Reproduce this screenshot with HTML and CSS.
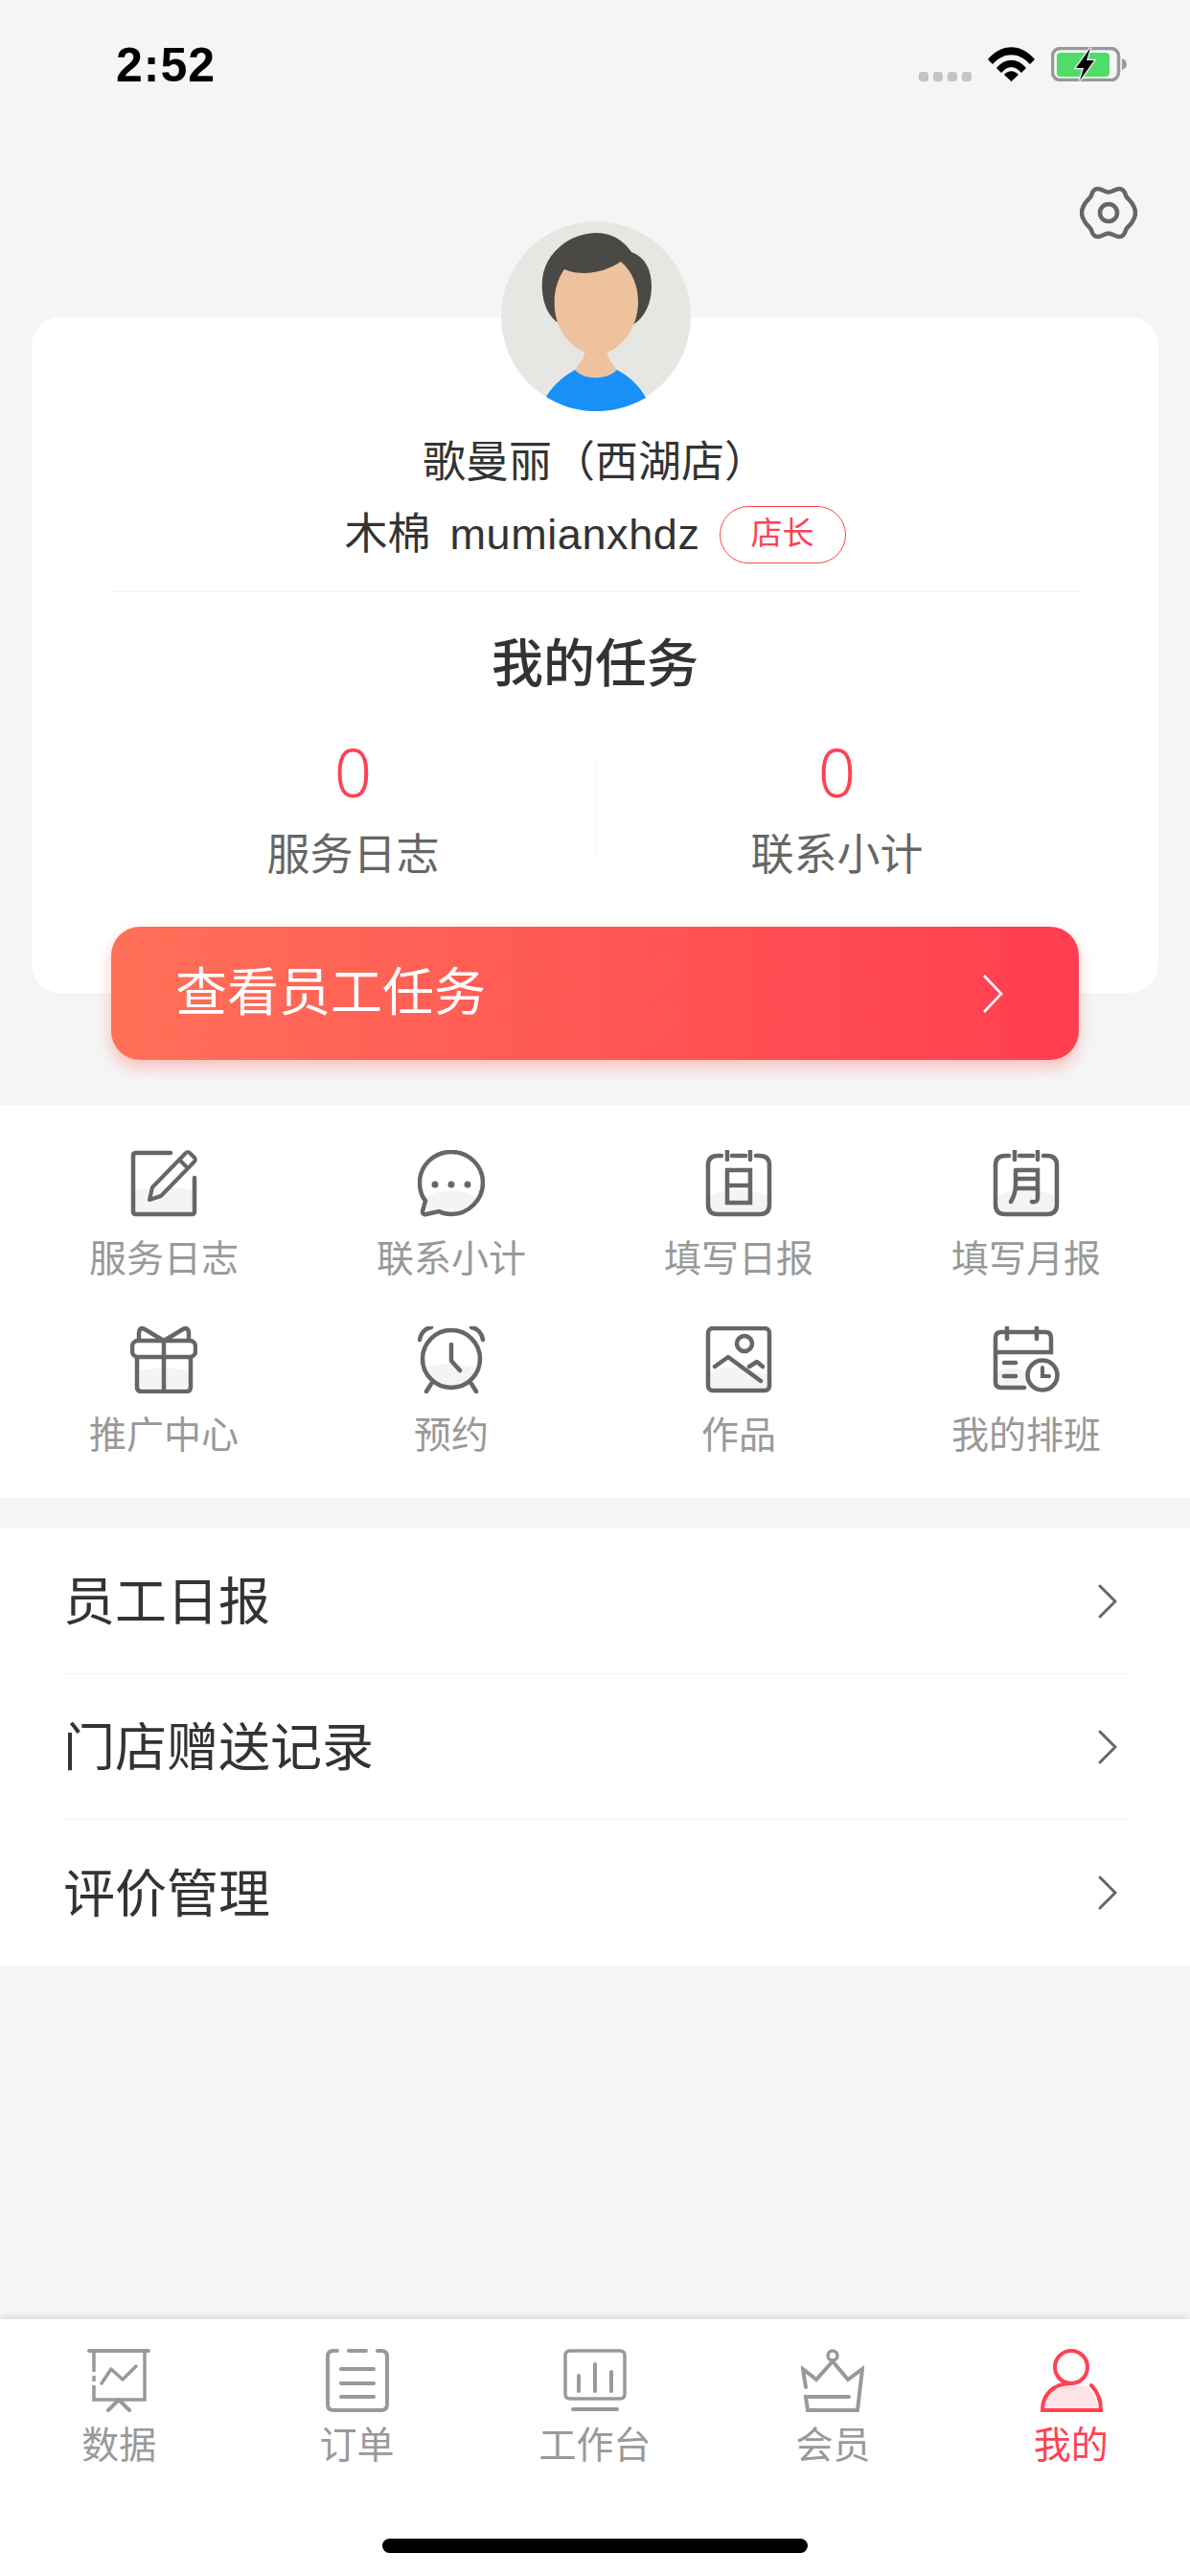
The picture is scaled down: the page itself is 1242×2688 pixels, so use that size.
FILE: index.html
```html
<!DOCTYPE html>
<html lang="zh-CN">
<head>
    <meta charset="UTF-8">
    <meta name="viewport" content="width=device-width, initial-scale=1.0">
    <title>我的</title>
    <link rel="stylesheet" href="styles.css">
</head>
<body>
<div class="page">
    <div class="status-bar">
        <span class="time">2:52</span>
        <div class="status-icons">
            <div class="signal"><i></i><i></i><i></i><i></i></div>
            <svg class="wifi" viewBox="0 0 49 36"><path d="M0 13 C14 -4 35 -4 49 13 L44 18 C32 5 17 5 5 18Z M9 22 C18 11 31 11 40 22 L35 27 C28 19 21 19 14 27Z M17 29 C21 24 28 24 32 29 L24.5 36Z" fill="#000"/></svg>
            <svg class="battery" viewBox="0 0 80 36"><rect x="1.5" y="1.5" width="69" height="33" rx="8" fill="none" stroke="#999" stroke-width="3.5"/><rect x="6" y="6" width="55" height="25" rx="4" fill="#4fdc68"/><path d="M74 12 C77 13 79 15 79 18 C79 21 77 23 74 24Z" fill="#999"/><path d="M41 1 L26 22 H34 L30 35 L45 14 H37 L41 1Z" fill="#000" stroke="#f5f5f5" stroke-width="2.5" paint-order="stroke"/></svg>
        </div>
    </div>

    <div class="settings-row">
        <svg class="gear" viewBox="0 0 60 58"><path d="M19 4 C23 4 26 7.5 30 7.5 C34 7.5 37 4 41 4 C45 4 47 7 48 11 C49 14 53 16 55 20 C57 23 58 26 58 29 C58 32 57 35 55 38 C53 42 49 44 48 47 C47 51 45 54 41 54 C37 54 34 50.5 30 50.5 C26 50.5 23 54 19 54 C15 54 13 51 12 47 C11 44 7 42 5 38 C3 35 2 32 2 29 C2 26 3 23 5 20 C7 16 11 14 12 11 C13 7 15 4 19 4Z" fill="none" stroke="#666" stroke-width="4.5" stroke-linejoin="round"/><circle cx="30" cy="29" r="9" fill="none" stroke="#666" stroke-width="4.5"/></svg>
    </div>

    <section class="profile-card">
        <svg class="avatar" viewBox="0 0 198 198">
            <circle cx="99" cy="99" r="99" fill="#e6e7e3"/>
            <path d="M58 105 C46 95 42.700 80 42.700 66 C42.700 35 70 12 100 12 C115 12 128 20 136 32 C150 37 157 50 157 68 C157 85 150 100 139 107Z" fill="#4b4946"/>
            <path d="M88 134 H110 C111 142 116 149 122 156 L99 170 L76 156 C82 149 87 142 88 134Z" fill="#eec29d"/>
            <path d="M66 50 C73 53 80 54 87 54 C100 54 115 49 125 42 C137 52 143 68 143 84 C143 112 125 133 110 137 C103 139 95 139 88 137 C70 130 55 110 55.700 84 C55.700 72 59 60 66 50Z" fill="#eec29d"/>
            <path d="M47 183 C55 170 66 161 77 155 C87 166 110 166 121 155 C133 161 144 171 151 184 C118 203 78 203 47 183Z" fill="#1890f8"/>
        </svg>
        <div class="shop-name">歌曼丽（西湖店）</div>
        <div class="user-line">
            <span>木棉</span>
            <span class="user-id">mumianxhdz</span>
            <span class="role-tag">店长</span>
        </div>
        <h2 class="task-title">我的任务</h2>
        <div class="task-stats">
            <div class="stat"><div class="stat-num">0</div><div class="stat-label">服务日志</div></div>
            <div class="stat"><div class="stat-num">0</div><div class="stat-label">联系小计</div></div>
        </div>
    </section>

    <a class="task-btn">
        <span>查看员工任务</span>
        <svg class="btn-arrow" viewBox="0 0 22 40"><path d="M2 1 L20 20 L2 39" fill="none" stroke="#fff" stroke-width="2.600"/></svg>
    </a>

    <section class="shortcuts">
        <div class="shortcut">
            <svg class="grid-icon" viewBox="0 0 70 70"><path d="M3 43 C20 38 50 38 67 43 V66 H3Z" fill="#f4f4f4"/><path d="M42 3 H6 Q3 3 3 6 V64 Q3 67 6 67 H64 Q67 67 67 64 V29" fill="none" stroke="#666" stroke-width="4.500" stroke-linecap="round"/><path d="M23 39 L58 3 Q60 1.500 62 3 L67 8 Q68.500 10 67 12 L32 48 L20 52Z M51 10 L60 19" fill="none" stroke="#666" stroke-width="4" stroke-linejoin="round"/></svg>
            <span>服务日志</span>
        </div>
        <div class="shortcut">
            <svg class="grid-icon" viewBox="0 0 70 70"><path d="M8 50 C18 40 50 40 62 50 C55 64 40 68 28 66 L10 67Z" fill="#f4f4f4"/><path d="M35 2 C17 2 2 16 2 34 C2 42 4 48 8 53 L5 64 Q5 68 9 67 L22 64 C26 66 30 67 35 67 C53 67 68 52 68 34 C68 16 53 2 35 2Z" fill="none" stroke="#666" stroke-width="4.500"/><circle cx="18" cy="36" r="3.500" fill="#666"/><circle cx="35" cy="36" r="3.500" fill="#666"/><circle cx="52" cy="36" r="3.500" fill="#666"/></svg>
            <span>联系小计</span>
        </div>
        <div class="shortcut">
            <svg class="grid-icon" viewBox="0 0 70 70"><path d="M3 50 C20 38 50 38 67 50 V62 Q67 67 60 67 H10 Q3 67 3 62Z" fill="#f4f4f4"/><path d="M17 6 H13 Q3 6 3 16 V57 Q3 67 13 67 H57 Q67 67 67 57 V16 Q67 6 57 6 H53 M28 6 H42 M23 1 V10 M47 1 V10" fill="none" stroke="#666" stroke-width="4.500" stroke-linecap="round"/><path d="M23 21 H47 V55 H23Z M23 37 H47" fill="none" stroke="#666" stroke-width="4.500"/></svg>
            <span>填写日报</span>
        </div>
        <div class="shortcut">
            <svg class="grid-icon" viewBox="0 0 70 70"><path d="M3 50 C20 38 50 38 67 50 V62 Q67 67 60 67 H10 Q3 67 3 62Z" fill="#f4f4f4"/><path d="M17 6 H13 Q3 6 3 16 V57 Q3 67 13 67 H57 Q67 67 67 57 V16 Q67 6 57 6 H53 M28 6 H42 M23 1 V10 M47 1 V10" fill="none" stroke="#666" stroke-width="4.500" stroke-linecap="round"/><path d="M24 21 H47 V50 Q47 55 41 54 M47 30 H24 M47 40 H24 M24 21 V36 Q24 46 19 54" fill="none" stroke="#666" stroke-width="4.500" stroke-linecap="round"/></svg>
            <span>填写月报</span>
        </div>
        <div class="shortcut">
            <svg class="grid-icon" viewBox="0 0 70 70"><path d="M7 48 C20 42 50 42 63 48 V64 H7Z" fill="#f4f4f4"/><path d="M35 15 L15 3 Q9 0 9 8 V15 M35 15 L55 3 Q61 0 61 8 V15" fill="none" stroke="#666" stroke-width="4.500"/><rect x="2" y="15" width="66" height="17" rx="6" fill="none" stroke="#666" stroke-width="4.500"/><path d="M7 32 V63 Q7 68 12 68 H58 Q63 68 63 63 V32 M35 15 V68" fill="none" stroke="#666" stroke-width="4.500"/></svg>
            <span>推广中心</span>
        </div>
        <div class="shortcut">
            <svg class="grid-icon" viewBox="0 0 70 70"><path d="M6 44 C20 38 50 38 64 44 C62 56 50 64 35 64 C20 64 8 56 6 44Z" fill="#f4f4f4"/><circle cx="35" cy="34" r="30" fill="none" stroke="#666" stroke-width="4.500"/><path d="M35 19 V36 L44 46 M2 14 C3 7 8 2 14 1 M68 14 C67 7 62 2 56 1 M14 60 L9 68 M56 60 L61 68" fill="none" stroke="#666" stroke-width="4.500" stroke-linecap="round"/></svg>
            <span>预约</span>
        </div>
        <div class="shortcut">
            <svg class="grid-icon" viewBox="0 0 70 70"><path d="M3 50 C20 38 40 42 67 52 V66 H3Z" fill="#f4f4f4"/><rect x="3" y="2" width="64" height="65" rx="5" fill="none" stroke="#666" stroke-width="4.500"/><circle cx="41" cy="18" r="8" fill="none" stroke="#666" stroke-width="4.500"/><path d="M10 42 L24 32 L58 57 M46 42 L54 37 L60 42" fill="none" stroke="#666" stroke-width="4.500" stroke-linecap="round" stroke-linejoin="round"/></svg>
            <span>作品</span>
        </div>
        <div class="shortcut">
            <svg class="grid-icon" viewBox="0 0 70 70"><path d="M4 48 C15 42 30 42 40 50 L36 63 H4Z" fill="#f4f4f4"/><path d="M33 64 H9 Q3 64 3 58 V12 Q3 6 9 6 H55 Q61 6 61 12 V27 H3 M15 1 V13 M46 1 V13" fill="none" stroke="#666" stroke-width="4.500" stroke-linecap="round"/><path d="M12 38 H24 M12 52 H24" stroke="#666" stroke-width="4.500" stroke-linecap="round"/><circle cx="52" cy="51" r="15.500" fill="#fff" stroke="#666" stroke-width="4.500"/><path d="M52 43 V52 H59" fill="none" stroke="#666" stroke-width="4" stroke-linecap="round"/></svg>
            <span>我的排班</span>
        </div>
    </section>

    <section class="menu">
        <div class="menu-row"><span>员工日报</span><svg class="menu-arrow" viewBox="0 0 20 36"><path d="M2 2 L18 18 L2 34" fill="none" stroke="#666" stroke-width="3" stroke-linecap="round"/></svg></div>
        <div class="menu-row"><span>门店赠送记录</span><svg class="menu-arrow" viewBox="0 0 20 36"><path d="M2 2 L18 18 L2 34" fill="none" stroke="#666" stroke-width="3" stroke-linecap="round"/></svg></div>
        <div class="menu-row"><span>评价管理</span><svg class="menu-arrow" viewBox="0 0 20 36"><path d="M2 2 L18 18 L2 34" fill="none" stroke="#666" stroke-width="3" stroke-linecap="round"/></svg></div>
    </section>

    <nav class="tabbar">
        <div class="tabs">
            <div class="tab">
                <svg class="tab-icon" viewBox="0 0 66 66"><path d="M2 2 H64" stroke="#999" stroke-width="4" stroke-linecap="round"/><path d="M7 2 V24 M7 28 V34 M7 38 V53 H60 V2" fill="none" stroke="#999" stroke-width="3.500"/><path d="M15 36 L25 21 L37 32 L51 18" fill="none" stroke="#999" stroke-width="3.500" stroke-linecap="round" stroke-linejoin="round"/><path d="M33 53 L22 64 M33 53 L44 64" stroke="#999" stroke-width="4" stroke-linecap="round"/></svg>
                <span>数据</span>
            </div>
            <div class="tab">
                <svg class="tab-icon" viewBox="0 0 66 66"><path d="M12 2 H8 Q2 2 2 8 V58 Q2 64 8 64 H58 Q64 64 64 58 V8 Q64 2 58 2 H54 M24 2 H42" fill="none" stroke="#999" stroke-width="4" stroke-linecap="round"/><path d="M16 21 H50 M16 36 H50 M16 50 H50" stroke="#999" stroke-width="4" stroke-linecap="round"/></svg>
                <span>订单</span>
            </div>
            <div class="tab">
                <svg class="tab-icon" viewBox="0 0 66 66"><path d="M7 2 H59 Q64 2 64 7 V47 Q64 52 59 52 H7 Q2 52 2 47 V7 Q2 2 7 2Z" fill="none" stroke="#999" stroke-width="3.500"/><path d="M16 28 V44 M33 16 V44 M50 24 V44 M10 63 H56" stroke="#999" stroke-width="4" stroke-linecap="round"/></svg>
                <span>工作台</span>
            </div>
            <div class="tab">
                <svg class="tab-icon" viewBox="0 0 66 66"><circle cx="33" cy="7" r="5" fill="none" stroke="#999" stroke-width="3.500"/><path d="M5 40 L2 21 L16 32 L33 13 L49 32 L64 21 L59 64 H7 L5 50 H50" fill="none" stroke="#999" stroke-width="4" stroke-linecap="round"/></svg>
                <span>会员</span>
            </div>
            <div class="tab tab-active">
                <svg class="tab-icon" viewBox="0 0 66 66"><path d="M6 62 C6 46 14 38 20 38 H48 C56 44 60 52 60 62Z" fill="#ffe4e7"/><circle cx="33" cy="19" r="17" fill="none" stroke="#ff4152" stroke-width="4"/><path d="M33 36 C14 36 3 48 3 64 H64 C64 52 60 44 54 38" fill="none" stroke="#ff4152" stroke-width="4" stroke-linecap="round"/></svg>
                <span>我的</span>
            </div>
        </div>
        <div class="home-bar"></div>
    </nav>
</div>
</body>
</html>
```

FILE: styles.css
```css
:root {
    --bg-color: #f5f5f5;
    --red: #ff4152;
    --dark: #333;
    --grey: #999;
}
* {
    box-sizing: border-box;
}
body {
    margin: 0;
    background-color: var(--bg-color);
    font-family: 'Liberation Sans', 'Noto Sans CJK SC', sans-serif;
    color: var(--dark);
}
.page {
    width: 1242px;
    height: 2688px;
    display: flex;
    flex-direction: column;
    overflow: hidden;
}
.status-bar {
    height: 132px;
    padding: 0 65px 0 121px;
    display: flex;
    justify-content: space-between;
    align-items: flex-start;
    flex-shrink: 0;
}
.time {
    margin-top: 38px;
    font-size: 50px;
    line-height: 60px;
    font-weight: bold;
    color: #000;
    letter-spacing: 1px;
}
.status-icons {
    margin-top: 49px;
    display: flex;
    align-items: flex-start;
}
.signal {
    display: flex;
    gap: 5px;
    margin: 26px 17px 0 0;
}
.signal i {
    width: 10px;
    height: 10px;
    border-radius: 3px;
    background-color: #c4c4c4;
}
.wifi {
    width: 49px;
    height: 36px;
    margin-right: 17px;
}
.battery {
    width: 80px;
    height: 36px;
}
.settings-row {
    height: 131px;
    padding: 61px 55px 0 0;
    display: flex;
    justify-content: flex-end;
    flex-shrink: 0;
}
.gear {
    width: 60px;
    height: 58px;
}
.profile-card {
    position: relative;
    height: 705px;
    margin: 68px 33px 0;
    background-color: #fff;
    border-radius: 30px;
    padding-top: 122px;
    text-align: center;
    flex-shrink: 0;
}
.avatar {
    position: absolute;
    top: -100px;
    left: 490px;
    width: 198px;
    height: 198px;
}
.shop-name {
    font-size: 45px;
    line-height: 60px;
}
.user-line {
    margin: 0 83px;
    padding: 15px 0 29px;
    border-bottom: 1px solid #f2f2f2;
    display: flex;
    justify-content: center;
    align-items: center;
    font-size: 45px;
    line-height: 60px;
}
.user-id {
    margin-left: 20px;
    letter-spacing: 0.6px;
}
.role-tag {
    width: 132px;
    height: 60px;
    margin-left: 20px;
    border: 1px solid var(--red);
    border-radius: 30px;
    font-size: 33px;
    line-height: 56px;
    color: var(--red);
}
.task-title {
    margin: 40px 0 0;
    font-size: 54px;
    line-height: 70px;
    font-weight: 500;
}
.task-stats {
    display: flex;
    margin: 41px 83px 0;
    position: relative;
}
.task-stats::after {
    content: '';
    position: absolute;
    left: 50%;
    top: 24px;
    height: 98px;
    width: 1px;
    background-color: #f2f2f2;
}
.stat {
    flex: 1;
}
.stat-num {
    font-size: 69px;
    line-height: 72px;
    color: var(--red);
    font-family: 'Noto Sans', 'Liberation Sans', sans-serif;
    font-weight: 300;
}
.stat-label {
    margin-top: 22px;
    font-size: 45px;
    line-height: 60px;
    color: #666;
}
.task-btn {
    height: 139px;
    margin: -69px 116px 0;
    padding: 0 79px 0 67px;
    border-radius: 30px;
    background: linear-gradient(90deg, #ff7058, #ff3e50);
    box-shadow: 0 8px 16px rgba(255, 90, 80, 0.35);
    display: flex;
    justify-content: space-between;
    align-items: center;
    position: relative;
    color: #fff;
    font-size: 54px;
    flex-shrink: 0;
}
.task-btn span {
    margin-bottom: 10px;
}
.btn-arrow {
    width: 22px;
    height: 40px;
}
.shortcuts {
    margin-top: 47px;
    height: 410px;
    padding: 47px 21px 0;
    background-color: #fff;
    display: grid;
    grid-template-columns: repeat(4, 300px);
    grid-auto-rows: 184px;
    flex-shrink: 0;
}
.shortcut {
    display: flex;
    flex-direction: column;
    align-items: center;
    font-size: 39px;
    line-height: 54px;
    color: var(--grey);
}
.grid-icon {
    width: 70px;
    height: 70px;
    margin-bottom: 17px;
}
.menu {
    margin-top: 32px;
    padding: 0 66px 0 68px;
    background-color: #fff;
    flex-shrink: 0;
}
.menu-row {
    height: 152px;
    padding-right: 10px;
    border-bottom: 1px solid #f2f2f2;
    display: flex;
    justify-content: space-between;
    align-items: center;
    font-size: 54px;
}
.menu-row span {
    margin: 0 0 6px -2px;
}
.menu-row:last-child {
    border-bottom: none;
}
.menu-arrow {
    width: 20px;
    height: 36px;
}
.tabbar {
    margin-top: auto;
    height: 268px;
    background-color: #fff;
    box-shadow: 0 -2px 8px rgba(0, 0, 0, 0.12);
    position: relative;
    flex-shrink: 0;
}
.tabs {
    display: flex;
    padding-top: 31px;
}
.tab {
    flex: 1;
    display: flex;
    flex-direction: column;
    align-items: center;
    font-size: 39px;
    line-height: 50px;
    color: var(--grey);
}
.tab-active {
    color: var(--red);
}
.tab-icon {
    width: 66px;
    height: 66px;
    margin-bottom: 10px;
}
.home-bar {
    position: absolute;
    left: 399px;
    bottom: 24px;
    width: 444px;
    height: 15px;
    border-radius: 8px;
    background-color: #000;
}
```
